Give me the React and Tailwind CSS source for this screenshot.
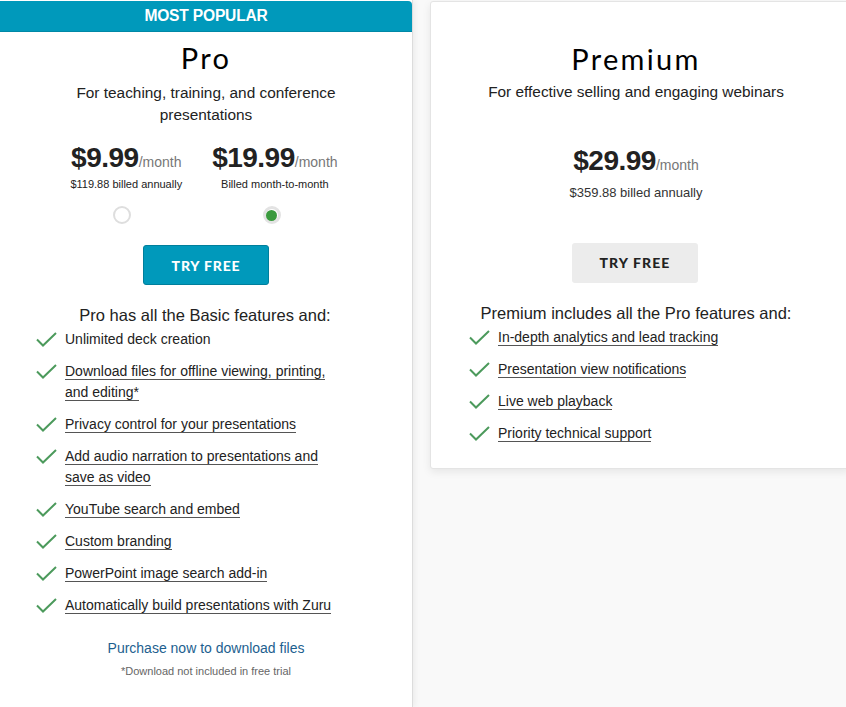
import React from 'react';

const proFeatures = [
  { text: 'Unlimited deck creation', plain: true },
  { text: 'Download files for offline viewing, printing, and editing*' },
  { text: 'Privacy control for your presentations' },
  { text: 'Add audio narration to presentations and save as video' },
  { text: 'YouTube search and embed' },
  { text: 'Custom branding' },
  { text: 'PowerPoint image search add-in' },
  { text: 'Automatically build presentations with Zuru' },
];

const premiumFeatures = [
  'In-depth analytics and lead tracking',
  'Presentation view notifications',
  'Live web playback',
  'Priority technical support',
];

const Check = () => (
  <svg width="21" height="15" viewBox="0 0 21 15" className="shrink-0 mt-[3px]">
    <polyline points="1,7.5 7,13.5 20,1" fill="none" stroke="#4c9a5c" strokeWidth="2" />
  </svg>
);

const FeatureRow = ({ text, plain }) => (
  <li className="flex gap-[8px] items-start">
    <Check />
    <span className="leading-[21px]">
      {plain ? text : <span className="border-b border-[#555]">{text}</span>}
    </span>
  </li>
);

export default function App() {
  return (
    <div
      className="min-h-[707px] bg-[#f9f9f9] flex items-start gap-[17px] overflow-hidden text-[#222]"
      style={{ fontFamily: '"Liberation Sans", Arial, sans-serif' }}
    >
      {/* Pro card */}
      <div className="w-[413px] shrink-0 min-h-[707px] bg-white border-r border-[#dcdcdc] shadow-[2px_0_6px_rgba(0,0,0,0.06)] flex flex-col pt-[1px]">
        <div className="h-[31px] bg-[#0099bb] rounded-tr-[4px] flex items-center justify-center text-white font-bold text-[15.6px] tracking-[-0.2px] border-b border-[#0088a6]">
          MOST POPULAR
        </div>
        <h2 className="mt-[9px] text-center text-[29px] leading-[34px] tracking-[0.08em] text-black" style={{ fontFamily: 'Lato, sans-serif' }}>
          Pro
        </h2>
        <p className="mx-auto mt-[7px] w-[290px] text-center text-[15.4px] leading-[22px]">
          For teaching, training, and conference presentations
        </p>

        <div className="mt-[17px] flex justify-center gap-[30px] pr-[4px]">
          <div className="flex flex-col items-center">
            <div className="flex items-baseline">
              <span className="text-[28px] font-bold leading-[30px] tracking-[-0.5px]">$9.99</span>
              <span className="text-[14px] text-[#777]">/month</span>
            </div>
            <div className="text-[11px] mt-[5px] leading-[13px]">$119.88 billed annually</div>
            <div className="mt-[15px] -translate-x-[4px] w-[18px] h-[18px] rounded-full border-2 border-[#dedede] bg-white" />
          </div>
          <div className="flex flex-col items-center">
            <div className="flex items-baseline">
              <span className="text-[28px] font-bold leading-[30px] tracking-[-0.5px]">$19.99</span>
              <span className="text-[14px] text-[#777]">/month</span>
            </div>
            <div className="text-[11px] mt-[5px] leading-[13px]">Billed month-to-month</div>
            <div className="mt-[15px] -translate-x-[3px] w-[18px] h-[18px] rounded-full border-[3px] border-[#e3e3e3] bg-white flex items-center justify-center">
              <div className="w-[11px] h-[11px] rounded-full bg-[#3a9a3e]" />
            </div>
          </div>
        </div>

        <button className="mx-auto mt-[21px] w-[126px] h-[40px] bg-[#0099bb] border border-[#007f9c] rounded-[3px] text-white text-[14px] font-black tracking-[0.06em]" style={{ fontFamily: 'Lato, sans-serif' }}>
          TRY FREE
        </button>

        <p className="mt-[19px] text-center text-[16.5px] leading-[22px] pr-[2px]">Pro has all the Basic features and:</p>

        <ul className="mt-[3px] ml-[36px] w-[300px] text-[14px] flex flex-col gap-[11px]">
          {proFeatures.map((f) => (
            <FeatureRow key={f.text} text={f.text} plain={f.plain} />
          ))}
        </ul>

        <a className="mt-[22px] text-center text-[14px] text-[#1d5f8f]">Purchase now to download files</a>
        <p className="mt-[4px] text-center text-[11px] text-[#666]">*Download not included in free trial</p>
      </div>

      {/* Premium card */}
      <div className="flex-1 mt-[1px] h-[468px] mr-[-4px] bg-white border border-[#e4e4e4] rounded-[3px] shadow-[0_3px_8px_rgba(0,0,0,0.08)] flex flex-col">
        <h2 className="mt-[40px] text-center text-[29px] leading-[34px] tracking-[0.08em] text-black pr-[8px]" style={{ fontFamily: 'Lato, sans-serif' }}>
          Premium
        </h2>
        <p className="mt-[5px] text-center text-[15.4px] leading-[22px] pr-[8px]">For effective selling and engaging webinars</p>

        <div className="mt-[43px] flex flex-col items-center pr-[8px]">
          <div className="flex items-baseline">
            <span className="text-[28px] font-bold leading-[30px] tracking-[-0.5px]">$29.99</span>
            <span className="text-[14px] text-[#777]">/month</span>
          </div>
          <div className="text-[13px] text-[#333] mt-[7px]">$359.88 billed annually</div>
        </div>

        <button className="mx-auto mt-[40px] w-[126px] h-[40px] bg-[#ececec] rounded-[3px] text-[#222] text-[14px] font-black tracking-[0.08em] translate-x-[-5px]" style={{ fontFamily: 'Lato, sans-serif' }}>
          TRY FREE
        </button>

        <p className="mt-[19px] text-center text-[16.5px] leading-[22px] pr-[8px]">Premium includes all the Pro features and:</p>

        <ul className="mt-[3px] ml-[38px] text-[14px] flex flex-col gap-[11px]">
          {premiumFeatures.map((t) => (
            <FeatureRow key={t} text={t} />
          ))}
        </ul>
      </div>
    </div>
  );
}
